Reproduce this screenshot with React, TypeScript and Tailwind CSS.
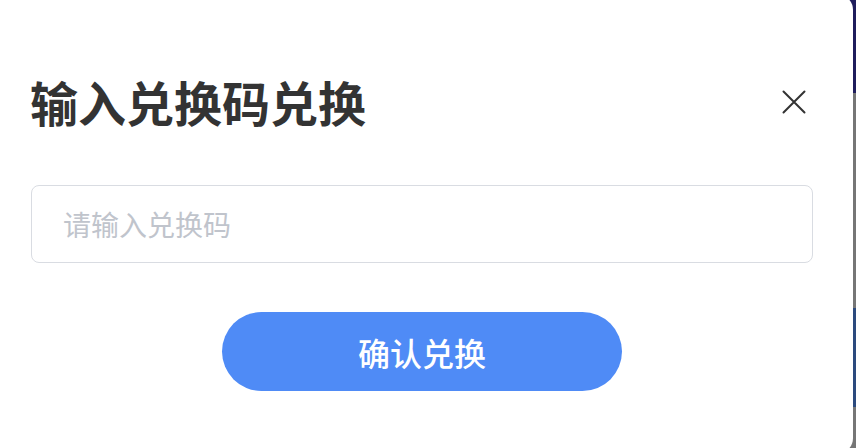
import React from "react";

const cjk = { fontFamily: '"Noto Sans CJK SC", "Noto Sans", sans-serif' };

export default function App() {
  return (
    <div className="relative w-[856px] h-[448px] overflow-hidden" style={cjk}>
      <div className="flex flex-col w-full h-full">
        <div className="h-[93px] bg-[#1f1d5c]" />
        <div className="h-[215px] bg-[#767676]" />
        <div className="h-[99px] bg-[#2c4a7e]" />
        <div className="flex-1 bg-[#767676]" />
      </div>
      <div className="absolute left-[-9px] top-[-6px] w-[862px] h-[460px] rounded-[16px] bg-white px-[40px] pt-[83px]">
        <div className="flex items-center justify-between h-[48px]">
          <h2 className="ml-[-1px] text-[48px] leading-[48px] font-bold text-[#333333]">输入兑换码兑换</h2>
          <button className="w-[24px] h-[24px] mr-[7px] mt-[2px] flex items-center justify-center">
            <svg width="24" height="24" viewBox="0 0 24 24" fill="none" stroke="#333333" strokeWidth="2" strokeLinecap="round">
              <path d="M1.5 1.5 L22.5 22.5 M22.5 1.5 L1.5 22.5" />
            </svg>
          </button>
        </div>
        <input
          className="mt-[60px] w-full h-[78px] border border-[#d9dce2] rounded-[8px] pl-[31px] text-[28px] text-[#333333] placeholder:text-[#c0c4cc] outline-none"
          placeholder="请输入兑换码"
          style={cjk}
        />
        <div className="flex justify-center mt-[49px]">
          <button className="w-[400px] h-[79px] rounded-full bg-[#4f8bf6] text-white text-[32px] font-medium" style={cjk}>
            确认兑换
          </button>
        </div>
      </div>
    </div>
  );
}
